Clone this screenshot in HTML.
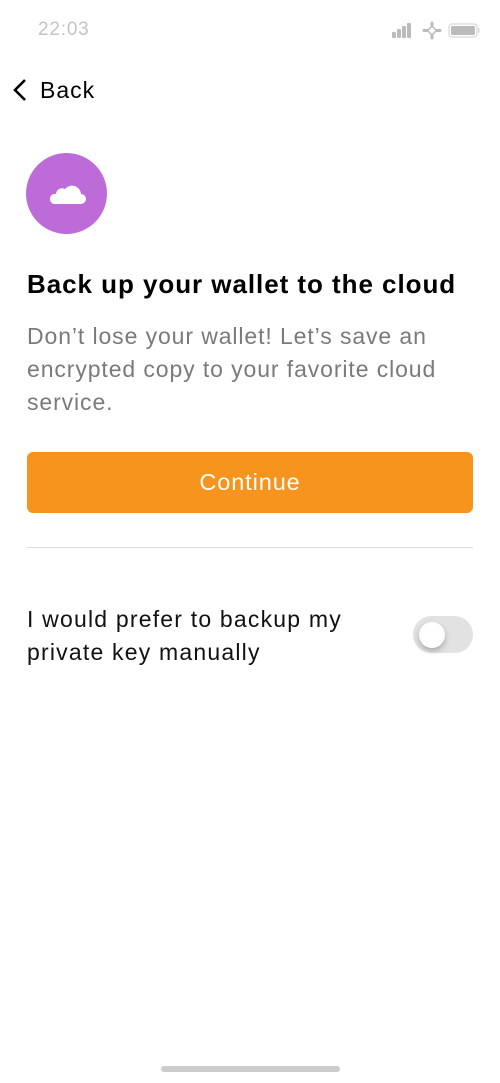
<!DOCTYPE html>
<html><head><style>
body{margin:0;width:500px;height:1083px;background:#fff;font-family:"Liberation Sans",sans-serif;position:relative;overflow:hidden}
.a{position:absolute}
</style></head><body>
<div class="a" style="left:38px;top:19px;font-size:19px;color:#c4c4c4;letter-spacing:0.8px">22:03</div>
<svg class="a" style="left:390px;top:21px" width="95" height="20">
<rect x="2" y="11" width="4" height="6" rx="1" fill="#bbb"/><rect x="7" y="8" width="4" height="9" rx="1" fill="#bbb"/><rect x="12" y="5" width="4" height="12" rx="1" fill="#bbb"/><rect x="17" y="2" width="4" height="15" rx="1" fill="#bbb"/>
<path d="M42 2v3M42 14v3M34 9.5h3M47 9.5h3" stroke="#bbb" stroke-width="3" stroke-linecap="round"/><path d="M42 5l4.5 4.5L42 14l-4.5-4.5z" fill="none" stroke="#bbb" stroke-width="1.5"/>
<rect x="59" y="3" width="28" height="13" rx="3" fill="none" stroke="#ddd" stroke-width="1.5"/><rect x="61" y="5" width="24" height="9" rx="1.5" fill="#bbb"/><rect x="88" y="7" width="1.5" height="5" fill="#ddd"/>
</svg>
<svg class="a" style="left:10px;top:78px" width="20" height="24"><path d="M15 2L5 12l10 10" fill="none" stroke="#000" stroke-width="2.6"/></svg>
<div class="a" style="left:40px;top:77px;font-size:23px;color:#000;letter-spacing:1px">Back</div>
<div class="a" style="left:26px;top:153px;width:81px;height:81px;border-radius:50%;background:#bc6bd9"></div>
<svg class="a" style="left:48px;top:181px" width="38" height="24"><path d="M6 23h27a5 5 0 0 0 0-10 9 9 0 0 0-16-5 6 6 0 0 0-9 5 5 5 0 0 0-2 10z" fill="#fff"/></svg>
<div class="a" style="left:27px;top:269px;font-size:26px;font-weight:bold;color:#000;letter-spacing:0.95px;white-space:nowrap">Back up your wallet to the cloud</div>
<div class="a" style="left:27px;top:320px;width:450px;font-size:23px;line-height:33px;color:#7a7a7a;letter-spacing:0.9px">Don’t lose your wallet! Let’s save an encrypted copy to your favorite cloud service.</div>
<div class="a" style="left:27px;top:452px;width:446px;height:61px;border-radius:6px;background:#f7941d;color:#fff;font-size:23.5px;line-height:61px;text-align:center;letter-spacing:0.9px">Continue</div>
<div class="a" style="left:27px;top:547px;width:446px;height:1px;background:#ddd"></div>
<div class="a" style="left:27px;top:603px;font-size:23px;line-height:33px;color:#111;letter-spacing:1.2px;white-space:nowrap">I would prefer to backup my<br>private key manually</div>
<div class="a" style="left:413px;top:616px;width:60px;height:37px;border-radius:19px;background:#e2e2e2"></div>
<div class="a" style="left:419px;top:622px;width:26px;height:26px;border-radius:50%;background:#fff;box-shadow:0 3px 6px rgba(0,0,0,.25)"></div>
<div class="a" style="left:161px;top:1066px;width:179px;height:6px;border-radius:3px;background:#ccc"></div>
</body></html>
